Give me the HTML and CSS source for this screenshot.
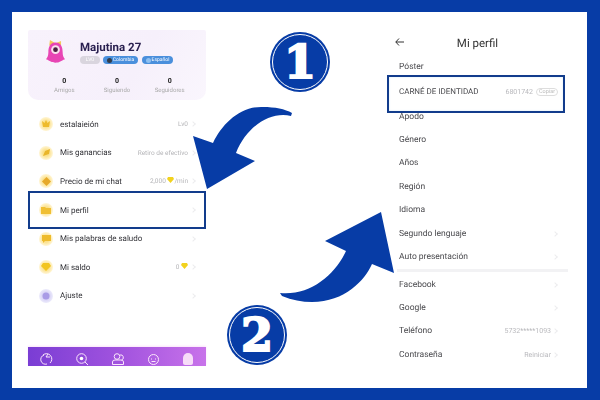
FILE: index.html

```html
<!DOCTYPE html>
<html lang="en">
<head>
    <meta charset="UTF-8">
    <title>Mi perfil</title>
    <link rel="stylesheet" href="styles.css">
</head>
<body>

<div class="frame">
    <div class="panel-left">
        <div class="profile">
            <div class="profile-top">
                <svg class="avatar" width="24" height="32" viewBox="0 0 24 32">
                    <path d="M12 5 L5 1 L4 8 Z M12 5 L19 2 L19 8 Z" fill="#f4c95a"/>
                    <path d="M12 4 C19 4 21 10 21 16 C21 20 22 23 24 25 C21 26 20 27 18 28 C15 30 9 30 6 28 C4 27 3 26 0 25 C2 23 3 20 3 16 C3 10 5 4 12 4 Z" fill="#e845b4"/>
                    <circle cx="12" cy="13" r="5.5" fill="#f9e3ee"/>
                    <circle cx="12" cy="13" r="3" fill="#4a2040"/>
                </svg>
                <div class="profile-info">
                    <div class="profile-name">Majutina 27</div>
                    <div class="chips">
                        <span class="chip chip-gray">LV0</span>
                        <span class="chip chip-blue chip-country"><i class="dot dot-dark"></i>Colombia</span>
                        <span class="chip chip-blue chip-lang"><i class="dot"></i>Español</span>
                    </div>
                </div>
            </div>
            <div class="stats">
                <div class="stat"><b>0</b><span>Amigos</span></div>
                <div class="stat"><b>0</b><span>Siguiendo</span></div>
                <div class="stat"><b>0</b><span>Seguidores</span></div>
            </div>
        </div>

        <div class="menu">
            <div class="menu-row">
                <span class="menu-icon"><svg width="8" height="8" viewBox="0 0 8 8"><path d="M0 1 L2.500 3 L4 0 L5.500 3 L8 1 L7 7 H1 Z" fill="#eebb2c"/></svg></span>
                <span class="menu-label">estalaieión</span>
                <span class="menu-value">Lv0</span><i class="chev"></i>
            </div>
            <div class="menu-row">
                <span class="menu-icon"><svg width="9" height="8" viewBox="0 0 9 8"><path d="M1 7 L3 2 L8 0 L7 5 Z" fill="#e9b52a"/></svg></span>
                <span class="menu-label">Mis ganancias</span>
                <span class="menu-value">Retiro de efectivo</span><i class="chev"></i>
            </div>
            <div class="menu-row">
                <span class="menu-icon"><svg width="9" height="9" viewBox="0 0 9 9"><path d="M4.500 0 L9 4.500 L4.500 9 L0 4.500 Z" fill="#e6a92a"/></svg></span>
                <span class="menu-label">Precio de mi chat</span>
                <span class="menu-value">2,000 <svg width="7" height="6" viewBox="0 0 7 6"><path d="M1 0 H6 L7 2 L3.500 6 L0 2 Z" fill="#f2d21e"/></svg>/min</span><i class="chev"></i>
            </div>
            <div class="menu-row menu-row-marked">
                <span class="menu-icon"><svg width="10" height="8" viewBox="0 0 10 8"><path d="M0 1 H4 L5 2 H10 V8 H0 Z" fill="#f0bf33"/></svg></span>
                <span class="menu-label">Mi perfil</span>
                <i class="chev"></i>
            </div>
            <div class="menu-row">
                <span class="menu-icon"><svg width="9" height="8" viewBox="0 0 9 8"><path d="M0 0 H9 V6 H3 L1 8 V6 H0 Z" fill="#eebb2c"/></svg></span>
                <span class="menu-label">Mis palabras de saludo</span>
                <i class="chev"></i>
            </div>
            <div class="menu-row">
                <span class="menu-icon"><svg width="10" height="8" viewBox="0 0 10 8"><path d="M2 0 H8 L10 3 L5 8 L0 3 Z" fill="#f2c521"/></svg></span>
                <span class="menu-label">Mi saldo</span>
                <span class="menu-value">0 <svg width="7" height="6" viewBox="0 0 7 6"><path d="M1 0 H6 L7 2 L3.500 6 L0 2 Z" fill="#f2d21e"/></svg></span><i class="chev"></i>
            </div>
            <div class="menu-row">
                <span class="menu-icon menu-icon-violet"><svg width="8" height="8" viewBox="0 0 8 8"><circle cx="4" cy="4" r="3.500" fill="#a99be6"/></svg></span>
                <span class="menu-label">Ajuste</span>
                <i class="chev"></i>
            </div>
        </div>

        <div class="tabbar">
            <svg width="14" height="12" viewBox="0 0 14 12"><path d="M5 2 A4.500 4.500 0 1 0 8 11 M4 2 A4.500 4.500 0 1 1 11 10 M9 1 L7 4 H11" class="tab-line"/></svg>
            <svg width="12" height="12" viewBox="0 0 12 12"><circle cx="5.500" cy="5.500" r="4.800" class="tab-line"/><circle cx="5.500" cy="5.500" r="1.800" fill="#fff"/><path d="M9 9 L12 12" class="tab-line"/></svg>
            <svg width="12" height="12" viewBox="0 0 12 12"><circle cx="5" cy="3.500" r="2.800" class="tab-line"/><path d="M8 2 A2.500 2.500 0 0 1 9.500 7 M.5 11.500 V9 Q.5 7 3 7 H9 Q11.500 7 11.500 9 V11.500 Z" class="tab-line"/></svg>
            <svg width="13" height="12" viewBox="0 0 13 12"><circle cx="6.500" cy="6.500" r="5" class="tab-line"/><path d="M4 6 h1 M8 6 h1 M4.500 8.500 H8.500" class="tab-line"/></svg>
            <svg width="10" height="12" viewBox="0 0 10 12"><path d="M0 5 A5 5 0 0 1 10 5 V10 Q10 12 8 12 H2 Q0 12 0 10 Z" fill="#f7dcf8"/></svg>
        </div>
    </div>

    <div class="steps">
        <div class="badge badge-one"><span>1</span></div>
        <div class="badge badge-two"><span>2</span></div>
    </div>

    <div class="panel-right">
        <div class="title-bar">
            <svg class="back" width="9" height="8" viewBox="0 0 9 8"><path d="M4 .5 L.8 4 L4 7.500 M.8 4 H9" fill="none" stroke="#333" stroke-width="1"/></svg>
            <span class="title">Mi perfil</span>
        </div>
        <div class="field"><span class="field-label">Póster</span></div>
        <div class="field field-marked">
            <span class="field-label">CARNÉ DE IDENTIDAD</span>
            <span class="field-value">6801742</span><span class="copy">Copiar</span>
        </div>
        <div class="field"><span class="field-label">Apodo</span></div>
        <div class="field"><span class="field-label">Género</span></div>
        <div class="field"><span class="field-label">Años</span></div>
        <div class="field"><span class="field-label">Región</span></div>
        <div class="field"><span class="field-label">Idioma</span></div>
        <div class="field"><span class="field-label">Segundo lenguaje</span><i class="chev"></i></div>
        <div class="field"><span class="field-label">Auto presentación</span><i class="chev"></i></div>
        <div class="band"></div>
        <div class="field"><span class="field-label">Facebook</span><i class="chev"></i></div>
        <div class="field"><span class="field-label">Google</span><i class="chev"></i></div>
        <div class="field"><span class="field-label">Teléfono</span><span class="field-value">5732*****1093</span><i class="chev"></i></div>
        <div class="field"><span class="field-label">Contraseña</span><span class="field-value">Reiniciar</span><i class="chev"></i></div>
    </div>

    <!-- the two big arrows run over both panels -->
    <svg class="arrows" width="600" height="400" viewBox="0 0 600 400">
        <path d="M193 136 L213 143 C222 124 240 106 263 107 C275 107 285 109 292 113 L291 116 C272 111 247 125 236 153 L255 161 L207 189 Z"/>
        <path d="M381 212 L325 241 L346 251 C335 275 310 296 280 293 L282 296 C292 300 302 302 312 302 C345 302 365 280 372 264 L394 273 Z"/>
    </svg>
</div>

</body>
</html>
```

FILE: styles.css

```css
body { margin: 0; font-family: Roboto, "Liberation Sans", sans-serif; background-color: #fff; text-rendering: geometricPrecision; }
i { font-style: normal; }

.frame { position: relative; box-sizing: border-box; width: 600px; height: 400px; border: 12px solid #073ca6; border-right-width: 13px; display: flex; background-color: #fff; overflow: hidden; }

/* left phone */
.panel-left { width: 178px; margin-left: 16px; padding: 18px 0 22px; box-sizing: border-box; display: flex; flex-direction: column; filter: blur(.3px); }
.profile { height: 70px; box-sizing: border-box; padding-top: 6px; border-radius: 2px 2px 10px 10px; background: linear-gradient(120deg, #f8f2fc, #f6f0fb 60%, #faf6fd); }
.profile-top { display: flex; padding-left: 18px; gap: 15px; }
.avatar { flex: none; margin-top: 3px; width: 19px; height: 26px; }
.profile-name { font-size: 11.500px; font-weight: 700; line-height: 14px; color: #2a2050; margin-top: 4px; }
.chips { display: flex; gap: 3px; margin-top: 2px; }
.chip { display: flex; align-items: center; justify-content: center; height: 8px; border-radius: 4px; font-size: 5px; color: #fff; }
.chip-gray { width: 20px; background-color: #d9d5de; }
.chip-blue { background-color: #4a8fdc; gap: 1px; }
.chip-country { width: 35px; }
.chip-lang { width: 31px; margin-left: 1px; }
.dot { width: 5px; height: 5px; border-radius: 50%; background-color: #8fc0f0; }
.dot-dark { background-color: #333c4a; }

.stats { display: flex; margin-top: 12px; padding: 0 10px; }
.stat { flex: 1; display: flex; flex-direction: column; align-items: center; gap: 2px; }
.stat b { font-size: 7px; line-height: 8px; color: #222; }
.stat span { font-size: 6px; line-height: 8px; color: #aaa; }

.menu { margin-top: 10px; }
.menu-row { position: relative; height: 28.6px; display: flex; align-items: center; padding: 0 10px 0 11px; font-size: 8px; color: #333338; }
.menu-row-marked::after { content: ""; position: absolute; left: 0; right: 0; top: -5px; bottom: -5px; border: 2px solid #123c8c; }
.menu-icon { flex: none; width: 14px; height: 14px; border-radius: 50%; background: radial-gradient(circle, #fbe08a 30%, #fff3cc 65%, #fffaf0 100%); display: flex; align-items: center; justify-content: center; }
.menu-icon-violet { background: radial-gradient(circle, #d4cef5 30%, #ecebfb 70%, #f8f8fe 100%); }
.menu-label { margin-left: 7px; flex: 1; white-space: nowrap; }
.menu-value { font-size: 6.5px; color: #b5b5b8; margin-right: 3px; white-space: nowrap; }
.chev { flex: none; width: 3px; height: 3px; border-top: 1px solid #ececee; border-right: 1px solid #ececee; transform: rotate(45deg); margin-right: 1px; }

.tabbar { margin-top: auto; height: 19px; box-sizing: border-box; padding: 0 13px 1px 11px; display: flex; align-items: flex-end; justify-content: space-between; background: linear-gradient(90deg, #7a3dd4, #a455df 55%, #c873ea); box-shadow: 0 -1px 2px #fbe4fb; }
.tab-line { fill: none; stroke: #fbe6fb; stroke-width: 1; }

/* numbered badges between the phones */
.steps { width: 181px; box-sizing: border-box; padding: 20px 0 23px; display: flex; flex-direction: column; justify-content: space-between; }
.badge { width: 60px; height: 60px; box-sizing: border-box; border-radius: 50%; background-color: #073ca6; display: flex; align-items: center; justify-content: center; position: relative; color: #fff; font-family: "DejaVu Serif", serif; font-weight: 700; font-size: 46px; line-height: 1; -webkit-text-stroke: 2px #fff; }
.badge::before { content: ""; position: absolute; inset: 2px; border: 1px solid #fff; border-radius: 50%; }
.badge-one { margin-left: 64px; }
.badge-two { margin-left: 21px; }

/* right phone */
.panel-right { width: 181px; box-sizing: border-box; padding-top: 18px; filter: blur(.3px); }
.title-bar { position: relative; height: 25px; display: flex; align-items: center; justify-content: center; }
.back { position: absolute; left: 8px; top: 8px; }
.title { font-size: 11.5px; color: #333; }
.field { position: relative; height: 23.4px; display: flex; align-items: center; padding: 0 10px 0 12px; font-size: 8.5px; color: #4a4a4e; }
.field-label { flex: 1; white-space: nowrap; }
.field-marked { height: 26.6px; }
.field-marked .field-label { font-size: 8px; }
.field-marked::after { content: ""; position: absolute; left: 0; right: 3px; top: -3.400px; bottom: -8px; border: 2px solid #123c8c; box-shadow: inset 0 0 2px #cfe6f7; }
.field-value { font-size: 7px; color: #b8b8bc; margin-right: 2px; }
.copy { font-size: 5.500px; color: #bbb; border: 1px solid #ddd; border-radius: 5px; padding: 0 2px; margin: 0 0 0 1px; }
.band { height: 3px; margin: 0 0 1.200px 10px; background-color: #f2f2f4; }

.arrows { position: absolute; left: -12px; top: -12px; pointer-events: none; }
.arrows path { fill: #073ca6; }
```
